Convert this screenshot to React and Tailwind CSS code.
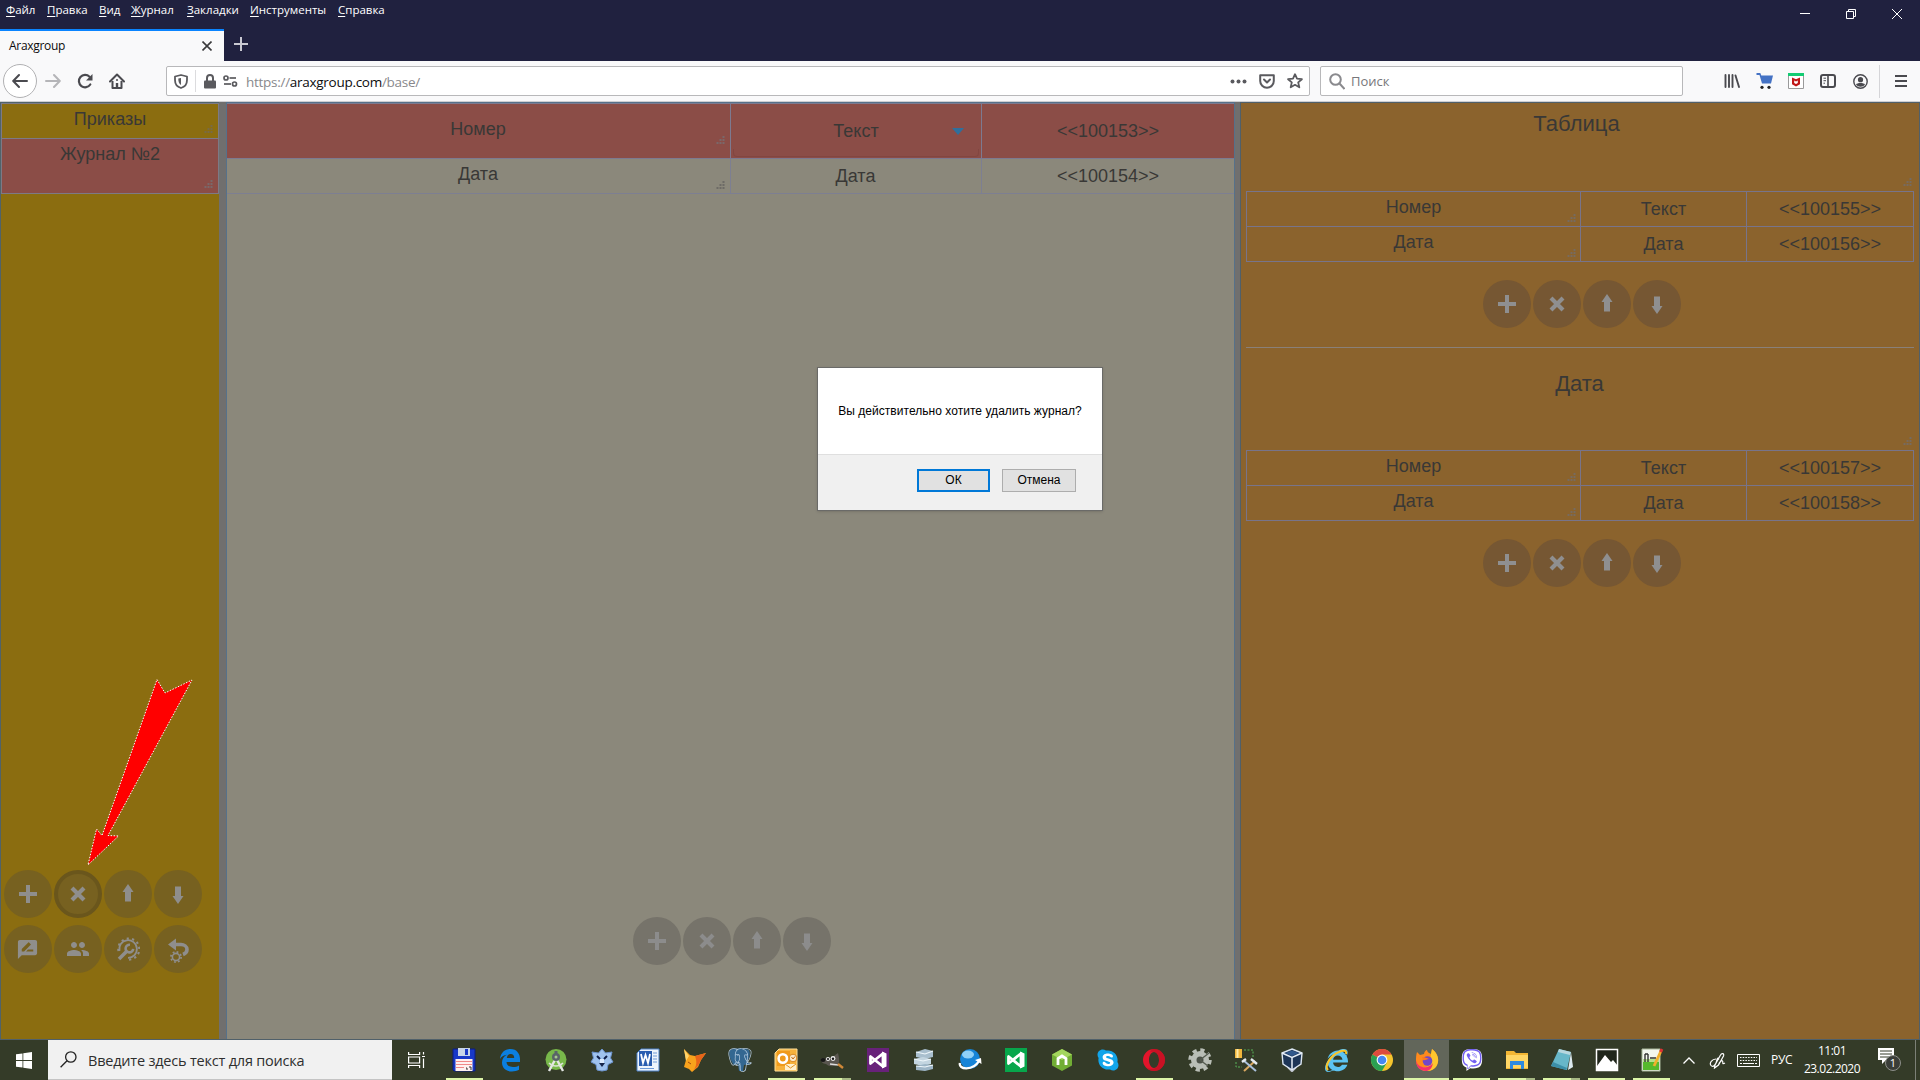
import React from "react";
import {FaInternetExplorer, FaSkype, FaViber} from "react-icons/fa";
import {MdGroup, MdRateReview} from "react-icons/md";
import {SiPostgresql} from "react-icons/si";

const menuItems = [
    {name: "Файл", width: "w-[41px]"},
    {name: "Правка", width: "w-[52px]"},
    {name: "Вид", width: "w-[32px]"},
    {name: "Журнал", width: "w-[56px]"},
    {name: "Закладки", width: "w-[63px]"},
    {name: "Инструменты", width: "w-[88px]"},
    {name: "Справка", width: "w-[60px]"},
];

const Grip = ({className = ""}) => (
    <svg className={`absolute ${className}`} width="9" height="9" viewBox="0 0 9 9" fill="currentColor">
        <path d="M6.5 0h2v2h-2zM3.5 3h2v2h-2zM6.5 3h2v2h-2zM.5 6h2v2h-2zM3.5 6h2v2h-2zM6.5 6h2v2h-2z" />
    </svg>
);

const PlusIcon = () => <svg width="18" height="18" viewBox="0 0 18 18" fill="currentColor"><path d="M7 0h4v7h7v4h-7v7H7v-7H0V7h7z" /></svg>;
const CrossIcon = () => <svg width="18" height="18" viewBox="0 0 18 18" fill="none" stroke="currentColor" strokeWidth="4.2"><path d="M3 3l12 12M15 3L3 15" /></svg>;
const UpIcon = () => <svg className="-mt-0.5" width="12" height="18" viewBox="0 0 12 18" fill="currentColor"><path d="M6 0l5.5 8H9v9.500H3V8H.5z" /></svg>;
const DownIcon = () => <svg className="mt-0.5" width="12" height="18" viewBox="0 0 12 18" fill="currentColor"><path d="M6 18l5.500-8H9V.5H3V10H.5z" /></svg>;

const GearWrenchIcon = () => (
    <svg className="-ml-px -mt-px" width="24" height="24" viewBox="0 0 24 24" fill="none" stroke="currentColor">
        <path d="M3.500 14A8.800 8.800 0 1 1 12 20.800" strokeWidth="1.800" />
        <path d="M2.500 14A10.500 10.500 0 1 1 12 22.500" strokeWidth="2.200" strokeDasharray="2.200 3.200" />
        <path d="M3 22l8-8" strokeWidth="3.600" />
        <path d="M14 7.800a3.800 3.800 0 1 0 3.200 4" strokeWidth="2.600" />
    </svg>
);

const UndoGearIcon = () => (
    <svg width="24" height="28" viewBox="0 0 24 28" fill="none" stroke="currentColor">
        <path d="M7 9.500h8c3 0 6 2 6 5 0 2.500-1.500 4-4 5" strokeWidth="3.600" />
        <path d="M10 3.500v12L2 9.500z" fill="currentColor" stroke="none" />
        <circle cx="10" cy="22" r="3.600" strokeWidth="1.600" />
        <circle cx="10" cy="22" r="5.100" strokeWidth="1.800" strokeDasharray="1.800 2.206" />
    </svg>
);

const RoundButton = ({children, className}) => (
    <button className={`w-12 h-12 rounded-full flex items-center justify-center ${className}`}>{children}</button>
);

const ButtonRow = ({className, color}) => (
    <div className={`flex gap-[2px] ${className}`}>
        <RoundButton className={color}><PlusIcon /></RoundButton>
        <RoundButton className={color}><CrossIcon /></RoundButton>
        <RoundButton className={color}><UpIcon /></RoundButton>
        <RoundButton className={color}><DownIcon /></RoundButton>
    </div>
);

const SideTable = ({rows}) => (
    <div className="w-[668px] ml-[5px] border-l border-t border-[#78748a]">
        {rows.map((row) => (
            <div key={row[2]} className="flex h-[35px] border-b border-[#78748a]">
                <div className="relative w-[334px] pb-1 border-r border-[#78748a] flex items-center justify-center">
                    {row[0]}
                    <Grip className="right-[4px] bottom-[3px] text-[#776b5f]" />
                </div>
                <div className="w-[166px] border-r border-[#78748a] flex items-center justify-center">{row[1]}</div>
                <div className="flex-1 border-r border-[#78748a] flex items-center justify-center">{row[2]}</div>
            </div>
        ))}
    </div>
);

const TabBar = () => (
    <div className="h-[61px] bg-[#20213f] flex justify-between font-['Open_Sans','Noto_Sans',sans-serif]">
        <div>
            <div className="h-[29px] pl-[6px] flex text-[11.500px] leading-5 text-white">
                {menuItems.map((item) => (
                    <span key={item.name} className={`whitespace-nowrap ${item.width}`}>
                        <span className="underline underline-offset-2">{item.name[0]}</span>{item.name.slice(1)}
                    </span>
                ))}
            </div>
            <div className="flex h-8">
                <div className="w-[224px] bg-[#f9f9fa] border-t-2 border-[#0a84ff] flex items-center justify-between pl-[9px] pr-[12px] text-[12px] tracking-[-0.3px] text-[#0c0c0d]">
                    Araxgroup
                    <svg width="10" height="10" viewBox="0 0 10 10" stroke="#3a3a3c" strokeWidth="1.600"><path d="M.5.5l9 9M9.500.5l-9 9" /></svg>
                </div>
                <div className="pl-[10px] pt-2">
                    <svg width="14" height="14" viewBox="0 0 14 14" stroke="#c9c9d2" strokeWidth="2"><path d="M7 0v14M0 7h14" /></svg>
                </div>
            </div>
        </div>
        <div className="flex gap-[36px] pt-[9px] pr-[18px] text-white">
            <svg width="10" height="10" viewBox="0 0 10 10" stroke="currentColor"><path d="M0 4.500h10" /></svg>
            <svg width="10" height="10" viewBox="0 0 10 10" stroke="currentColor" fill="none"><path d="M.5 2.500h7v7h-7zM2.500 2.500v-2h7v7h-2" /></svg>
            <svg width="10" height="10" viewBox="0 0 10 10" stroke="currentColor"><path d="M0 0l10 10M10 0L0 10" /></svg>
        </div>
    </div>
);

const NavBar = () => (
    <div className="h-[41px] bg-[#f9f9fa] border-b border-[#cfcfd2] flex items-center text-[#4a4a4f] font-['Open_Sans','Noto_Sans',sans-serif]">
        <div className="ml-[3px] w-[34px] h-[34px] rounded-full border border-[#b1b1b3] bg-white flex items-center justify-center">
            <svg width="16" height="16" viewBox="0 0 16 16" fill="none" stroke="currentColor" strokeWidth="2" strokeLinecap="round" strokeLinejoin="round"><path d="M15 8H1.500M7 2L1.200 8 7 14" /></svg>
        </div>
        <svg className="ml-2 text-[#b5b5b8]" width="16" height="16" viewBox="0 0 16 16" fill="none" stroke="currentColor" strokeWidth="2" strokeLinecap="round" strokeLinejoin="round"><path d="M1 8h13.500M9 2l5.800 6L9 14" /></svg>
        <svg className="ml-4" width="16" height="16" viewBox="0 0 16 16" fill="none" stroke="currentColor" strokeWidth="2.200" strokeLinecap="round">
            <path d="M13.300 11.500A6.200 6.200 0 1 1 12.500 3.700" />
            <path d="M15.500 1v6.500H9z" fill="currentColor" stroke="none" />
        </svg>
        <svg className="ml-4" width="16" height="16" viewBox="0 0 16 16" fill="none" stroke="currentColor" strokeWidth="2" strokeLinejoin="round">
            <path d="M1 8.500L8 1.500l7 7" strokeLinecap="round" />
            <path d="M3.500 8v7h9V8" />
            <path d="M8 14.500V10" strokeWidth="2.400" />
            <path d="M7 7h2" strokeWidth="1.500" />
        </svg>
        <div className="ml-[41px] w-[1144px] h-[30px] border border-[#b8b8ba] rounded-[2px] bg-white flex items-center text-[#5a5a5e]">
            <svg className="ml-[7px]" width="14" height="15" viewBox="0 0 14 15" fill="none" stroke="currentColor" strokeWidth="1.800">
                <path d="M7 1L13 2.500V6c0 4-2.500 7-6 8C3.500 13 1 10 1 6V2.500z" strokeLinejoin="round" />
                <path d="M7 4v7C5 10 4.300 8 4.300 4.600z" fill="currentColor" stroke="none" />
            </svg>
            <div className="ml-[7px] w-px h-[22px] bg-[#dcdcde]"></div>
            <svg className="ml-2" width="12" height="15" viewBox="0 0 12 15" fill="none" stroke="currentColor">
                <path d="M3 7V4a3 3 0 0 1 6 0v3" strokeWidth="2" />
                <rect x="0" y="6.500" width="12" height="8" rx="1" fill="currentColor" stroke="none" />
            </svg>
            <svg className="ml-[7px]" width="15" height="12" viewBox="0 0 15 12" fill="none" stroke="currentColor" strokeWidth="1.700">
                <circle cx="3" cy="3" r="2" /><path d="M6.500 3H13" /><circle cx="11.500" cy="9" r="2" /><path d="M1 9h7" />
            </svg>
            <div className="ml-[8px] pt-[2px] text-[13.500px] text-[#88888c] tracking-[-0.280px]">https://<span className="text-[#0c0c0d]">araxgroup.com</span>/base/</div>
            <svg className="ml-auto" width="17" height="5" viewBox="0 0 17 5" fill="currentColor"><circle cx="2.500" cy="2.500" r="2" /><circle cx="8.500" cy="2.500" r="2" /><circle cx="14.500" cy="2.500" r="2" /></svg>
            <svg className="ml-[12px]" width="16" height="15" viewBox="0 0 16 15" fill="none" stroke="currentColor" strokeWidth="2" strokeLinecap="round" strokeLinejoin="round">
                <path d="M1.200 1.200h13.600V7a6.800 6.800 0 0 1-13.600 0z" /><path d="M5 5.500l3 3 3-3" />
            </svg>
            <svg className="ml-[12px] mr-[6px]" width="16" height="16" viewBox="0 0 16 16" fill="none" stroke="currentColor" strokeWidth="1.800" strokeLinejoin="round">
                <path d="M8 1.200l2 4.500 4.900.5-3.700 3.200 1.100 4.900L8 11.800l-4.300 2.500 1.100-4.900L1.100 6.200 6 5.700z" />
            </svg>
        </div>
        <div className="ml-[10px] w-[363px] h-[30px] border border-[#b8b8ba] rounded-[2px] bg-white flex items-center pl-[8px] text-[#8a8a8e]">
            <svg width="16" height="17" viewBox="0 0 16 17" fill="none" stroke="currentColor" strokeWidth="2"><circle cx="6.500" cy="6.500" r="5.300" /><path d="M10.500 10.500l5 5.500" /></svg>
            <div className="ml-[6px] pt-[2px] text-[13px] text-[#77777b]">Поиск</div>
        </div>
        <svg className="ml-[41px]" width="16" height="14" viewBox="0 0 16 14" stroke="currentColor" strokeWidth="1.900" strokeLinecap="round"><path d="M1.500 1v12M5 1v12M8.500 1v12M11.500 1.500L15 13" /></svg>
        <svg className="ml-[16px]" width="17" height="16" viewBox="0 0 17 16">
            <path d="M.5 0h3.800l1 2.500H17l-2 8H6L3.500 2H.5z" fill="#4472c4" />
            <circle cx="6" cy="14.300" r="1.600" fill="#222" /><circle cx="13" cy="14.300" r="1.600" fill="#222" />
        </svg>
        <svg className="ml-[15px]" width="16" height="16" viewBox="0 0 16 16">
            <path d="M.5.5h15v15H.5z" fill="#fff" stroke="#9a9a9a" /><path d="M0 0h16v3H0z" fill="#12cc72" />
            <path d="M4 4.500l4 1.800 4-1.800v6.700l-4 2.300-4-2.300z" fill="#c01818" /><path d="M6.200 7.500L8 8.500l1.800-1v2.600L8 11l-1.800-.9z" fill="#fff" />
        </svg>
        <svg className="ml-[16px]" width="16" height="14" viewBox="0 0 16 14" fill="none" stroke="currentColor">
            <rect x="1" y="1" width="14" height="12" rx="2" strokeWidth="2" /><path d="M8 1v12" strokeWidth="1.600" /><path d="M3.500 4.200H6M3.500 6.700H6M3.500 9.200H5" />
        </svg>
        <svg className="ml-[17px]" width="15" height="15" viewBox="0 0 15 15" fill="none" stroke="currentColor">
            <circle cx="7.500" cy="7.500" r="6.700" strokeWidth="1.400" /><circle cx="7.500" cy="5.700" r="2.600" fill="currentColor" stroke="none" />
            <path d="M3 10.500C4 8.500 11 8.500 12 10.500 10 13.500 5 13.500 3 10.500z" fill="currentColor" stroke="none" />
        </svg>
        <div className="ml-[11px] w-px h-[33px] bg-[#d5d5d8]"></div>
        <svg className="ml-[15px]" width="12" height="12" viewBox="0 0 12 12" stroke="currentColor" strokeWidth="2"><path d="M0 1h12M0 6h12M0 11h12" /></svg>
    </div>
);

const Journals = () => (
    <div className="w-[219px] h-full bg-[#8b6d10] border-l border-t border-[#50636a] flex flex-col">
        <div className="relative h-[36px] border border-[#7d7a85] pt-[5px] text-center">
            Приказы
            <Grip className="right-[5px] bottom-[4px] text-[#786b45]" />
        </div>
        <div className="relative h-[56px] -mt-px border border-[#7d7a85] bg-[#8b4d47] pt-[5px] text-center">
            Журнал №2
            <Grip className="right-[5px] bottom-[4px] text-[#7a686a]" />
        </div>
        <div className="mt-auto mb-[66px] pl-[3px] grid grid-cols-[repeat(4,48px)] gap-x-[2px] gap-y-[7px] text-[#8f8e8c]">
            <RoundButton className="bg-[#776120]"><PlusIcon /></RoundButton>
            <RoundButton className="bg-[#776120] border-4 border-[#6a561c]"><CrossIcon /></RoundButton>
            <RoundButton className="bg-[#776120]"><UpIcon /></RoundButton>
            <RoundButton className="bg-[#776120]"><DownIcon /></RoundButton>
            <RoundButton className="bg-[#776120]"><MdRateReview className="-ml-px" size={23} /></RoundButton>
            <RoundButton className="bg-[#776120]"><MdGroup size={24} /></RoundButton>
            <RoundButton className="bg-[#776120]"><GearWrenchIcon /></RoundButton>
            <RoundButton className="bg-[#776120]"><UndoGearIcon /></RoundButton>
        </div>
    </div>
);

const Document = () => (
    <div className="w-[1009px] h-full bg-[#8b887b] border-x border-t border-[#56718a] flex flex-col">
        <div className="flex h-[56px] bg-[#8b4d47] border-y border-[#7d7a90]">
            <div className="relative w-[504px] pb-1 pr-px border-r border-[#7d7a90] flex items-center justify-center">
                Номер
                <Grip className="right-[5px] bottom-[13px] text-[#7a686a]" />
            </div>
            <div className="relative w-[251px] border-r border-[#7d7a90] flex items-center justify-center">
                <span className="absolute inset-x-[2px] bottom-px h-2 rounded-b-[4px] border-b border-x border-[#7d433e] opacity-60"></span>
                Текст
                <svg className="absolute right-[17px] top-[24px]" width="12" height="7" viewBox="0 0 12 7"><path d="M0 0h12L6 7z" fill="#2f6f9c" /></svg>
            </div>
            <div className="flex-1 flex items-center justify-center">&lt;&lt;100153&gt;&gt;</div>
        </div>
        <div className="flex h-[35px] border-b border-[#7d7f92]">
            <div className="relative w-[504px] pb-1 pr-px border-r border-[#7d7f92] flex items-center justify-center">
                Дата
                <Grip className="right-[5px] bottom-[3px] text-[#6d6b66]" />
            </div>
            <div className="w-[251px] pr-px border-r border-[#7d7f92] flex items-center justify-center">Дата</div>
            <div className="flex-1 flex items-center justify-center">&lt;&lt;100154&gt;&gt;</div>
        </div>
        <ButtonRow className="mt-auto mb-[74px] justify-center pl-[3px] text-[#8c8c8c]" color="bg-[#76736a]" />
    </div>
);

const Tables = () => (
    <div className="flex-1 h-full bg-[#8b632d] border-x border-t border-[#50606a]">
        <div className="relative h-[88px] pt-[7px] pr-[7px] text-center text-[22px] leading-7">
            Таблица
            <Grip className="right-[7px] bottom-[4px] text-[#776b5f]" />
        </div>
        <SideTable rows={[["Номер", "Текст", "<<100155>>"], ["Дата", "Дата", "<<100156>>"]]} />
        <ButtonRow className="mt-[18px] justify-center pl-[4px] text-[#8f8f90]" color="bg-[#765733]" />
        <div className="mt-[19px] mx-[5px] h-px bg-[#8a8078]"></div>
        <div className="relative h-[102px] pt-[22px] pr-px text-center text-[22px] leading-7">
            Дата
            <Grip className="right-[7px] bottom-[4px] text-[#776b5f]" />
        </div>
        <SideTable rows={[["Номер", "Текст", "<<100157>>"], ["Дата", "Дата", "<<100158>>"]]} />
        <ButtonRow className="mt-[18px] justify-center pl-[4px] text-[#8f8f90]" color="bg-[#765733]" />
    </div>
);

const ConfirmDialog = () => (
    <div className="absolute left-[817px] top-[367px] w-[286px] h-[144px] border border-[#6a6a68] bg-white text-[12px] text-black shadow-sm flex flex-col">
        <div className="h-[86px] flex items-center justify-center whitespace-nowrap tracking-[0.040px]">Вы действительно хотите удалить журнал?</div>
        <div className="flex-1 bg-[#f0f0f0] border-t border-[#dfdfdf] flex pt-[14px] pl-[99px] gap-[12px]">
            <button className="w-[73px] h-[23px] bg-[#e1e1e1] border-2 border-[#0078d7] flex items-center justify-center pb-px">ОК</button>
            <button className="w-[74px] h-[23px] bg-[#e1e1e1] border border-[#adadad] flex items-center justify-center pb-px">Отмена</button>
        </div>
    </div>
);

const Svg = ({children}) => <svg width="24" height="24" viewBox="0 0 24 24">{children}</svg>;

const VsLogo = ({color}) => (
    <Svg>
        <path d="M1 0h22v24H1z" fill={color} />
        <path d="M4.500 8.500v7L17 5.500v13z" fill="none" stroke="#fff" strokeWidth="2.800" strokeLinejoin="round" />
        <path d="M16 3.500l4.500 2v13l-4.500 2z" fill="#fff" />
    </Svg>
);

const taskIcons = [
    {name: "commander", open: true, icon: <Svg>
        <path d="M1 1h22v22H2L1 22z" fill="#1838c8" stroke="#0b1d80" /><path d="M6 0h12v8H6z" fill="#c7d4e8" /><path d="M13 1h3v6h-3z" fill="#1838c8" />
        <path d="M3.500 11h17v12h-17z" fill="#fff0f0" /><path d="M4 13.500h16M4 16.500h16M4 19.500h8" stroke="#f08888" strokeWidth="1.200" /><path d="M14 20h1v2M17 19h2v3" stroke="#333" fill="none" />
    </Svg>},
    {name: "edge", icon: <Svg>
        <path d="M2 11C3 4 7 1 12.500 1 19 1 22 6 22 11v3H8.500c.3 3.500 3 5 6.500 5 2.500 0 4.500-.7 6-1.600v4.400C19 23 16.500 23.500 14 23.500 8 23.500 4 20 4 14.500c0-3.600 2-6.300 5-7.700C6 7 3.500 8.500 2 11zm6.800-1h7.400c0-2.500-1.200-4-3.500-4S9.200 7.600 8.800 10z" fill="#0b7fe0" />
    </Svg>},
    {name: "android", icon: <Svg>
        <circle cx="12" cy="11.500" r="10.500" fill="#78b84a" /><path d="M12 3v4" stroke="#596468" strokeWidth="3" /><path d="M12 10L5 23M12 10l7 13" stroke="#e4e6e4" strokeWidth="2.400" /><path d="M5 15c4 4 10 4 14 0" stroke="#dfe6da" strokeWidth="1.500" fill="none" /><circle cx="12" cy="9" r="4" fill="#596468" /><circle cx="12" cy="9" r="1.500" fill="#a8c890" />
    </Svg>},
    {name: "wolf", icon: <Svg>
        <path d="M12 1l3.500 4L22 4l-1.500 6 2.500 4-5 2.500-1 5.500-5 1-5-1-1-5.500L1 14l2.500-4L2 4l6.500 1z" fill="#9fc3ef" stroke="#6c94cf" />
        <path d="M7 8l3 3M17 8l-3 3" stroke="#10204a" strokeWidth="2" /><path d="M9 15h6l-3 4z" fill="#16264c" /><path d="M10 11h4v4h-4z" fill="#dcecff" />
    </Svg>},
    {name: "word", icon: <Svg>
        <path d="M5 1h18v22H1V5z" fill="#eef4fc" stroke="#4a80c8" /><path d="M3 3h13v15H3z" fill="#2a5db0" /><path d="M5 6l2 9 2.500-8 2.500 8 2-9" fill="none" stroke="#fff" strokeWidth="1.800" /><path d="M17 5h4M17 8h4M17 11h4M17 14h4M4 20.500h14" stroke="#6e9ad8" />
    </Svg>},
    {name: "foxpro", icon: <Svg>
        <path d="M2 1l6 6 5 1 11-3-5 7-3 7-6 5-3-3-5-2 2-7z" fill="#f8a21c" /><path d="M13 8l11-3-5 7-3 6-5 5c4-5 4-10 2-15z" fill="#e8641a" /><path d="M2 1l5 7-3 5z" fill="#ffd36a" /><path d="M6 14l3 2" stroke="#a04a10" />
    </Svg>},
    {name: "postgres", icon: (
        <div className="relative">
            <svg className="absolute inset-0" width="24" height="24" viewBox="0 0 24 24"><path d="M2 2c4-2 15-2 19 0 2 4 0 9-2 12l3 2-6 1-1 6h-4l-1-7-4 1C3 14 0 6 2 2z" fill="#336791" /></svg>
            <SiPostgresql className="relative" size={24} color="#b4cbe0" />
        </div>
    )},
    {name: "outlook", open: true, icon: <Svg>
        <path d="M5 1h18v22H1V5z" fill="#f6b23c" stroke="#ffe09a" /><path d="M3 3h13v15H3z" fill="#f09a1a" /><circle cx="8.800" cy="10.500" r="4.200" fill="none" stroke="#fff" strokeWidth="2.600" /><circle cx="19" cy="10" r="3.800" fill="#fbe8c8" stroke="#d88820" /><path d="M17.500 9l1.500 2 2-2.500" stroke="#c46a10" fill="none" /><path d="M11 16h11v6H11z" fill="#fff0cc" /><path d="M11 16l5.500 4 5.500-4" stroke="#e09020" fill="none" />
    </Svg>},
    {name: "gimp", open: true, split: true, icon: <Svg>
        <path d="M1 10c4 2 11 0 17-5 1 4 2 9 0 11-3 3-9 3-12 0-3 0-6-3-5-6z" fill="#5a5650" /><circle cx="8" cy="11" r="2" fill="#eee" /><circle cx="13" cy="10.500" r="2.400" fill="#eee" /><circle cx="8" cy="11" r="1" fill="#111" /><circle cx="13" cy="10.800" r="1.200" fill="#111" /><ellipse cx="3" cy="12" rx="2.500" ry="2" fill="#161616" /><path d="M10 16l8 1" stroke="#ddd" strokeWidth="1.500" /><path d="M18 16l5 4" stroke="#d08838" strokeWidth="2.400" />
    </Svg>},
    {name: "studio", icon: <VsLogo color="#68217a" />},
    {name: "servers", icon: <Svg>
        <path d="M4 4l9-3 8 2v6l-8 2-9-2z" fill="#a9bfce" /><path d="M2 11l9-2 8 2v5l-8 2-9-2z" fill="#c3d5e0" /><path d="M4 18l9-2 8 1v4l-8 2-9-1z" fill="#9db5c6" /><path d="M4 4l9 2 8-3M2 11l9 2 8-2M4 18l9 1 8-2" stroke="#eef6fa" strokeWidth="1.200" fill="none" />
    </Svg>},
    {name: "globe", icon: <Svg>
        <circle cx="12" cy="11" r="10" fill="#1684d8" /><ellipse cx="10" cy="6.500" rx="6" ry="4" fill="#8fd0f8" /><path d="M2 15c-2 7 13 8 19-2" stroke="#fff" strokeWidth="2.400" fill="none" /><path d="M17 12l6-2 .5 6z" fill="#fff" />
    </Svg>},
    {name: "code", icon: <VsLogo color="#07a64b" />},
    {name: "node", icon: <Svg>
        <path d="M12 1l10 5.500v11L12 23 2 17.500v-11z" fill="#72ae35" /><path d="M12 1l10 5.500L12 12 2 6.500z" fill="#a4d65e" /><path d="M8 17v-6.500l4-2.500 4 2.500V17" stroke="#fff" strokeWidth="2.800" fill="none" />
    </Svg>},
    {name: "skype", icon: <FaSkype size={24} color="#12a5ea" className="bg-[radial-gradient(circle,white_45%,transparent_46%)]" />},
    {name: "opera", open: true, icon: <Svg>
        <path fillRule="evenodd" d="M12 1a11 11 0 1 0 0 22 11 11 0 0 0 0-22zm0 3c3 0 5 4 5 8s-2 8-5 8-5-4-5-8 2-8 5-8z" fill="#e3152b" /><path d="M12 1a11 11 0 0 1 0 22c-3 0-5-1-7-3 8 3 12-1 12-8s-5-9-9-8c1-2 3-3 4-3z" fill="#b80f20" opacity=".6" />
    </Svg>},
    {name: "gear", icon: <Svg>
        <circle cx="12" cy="12" r="9" fill="#b9beb6" /><circle cx="12" cy="12" r="10" fill="none" stroke="#b9beb6" strokeWidth="3.500" strokeDasharray="4.200 3.654" /><circle cx="12" cy="12" r="3.500" fill="#4b5147" /><path d="M12 12l9-7M12 12l8 6" stroke="#555c50" strokeWidth="1.400" />
    </Svg>},
    {name: "dbtools", icon: <Svg>
        <path d="M1 1h7v9H1z" fill="#f0b63c" /><path d="M2.500 1h2v9h-2z" fill="#ffe9a6" /><path d="M10 2h9v8M2 14v5h6" stroke="#58b558" strokeDasharray="2 1.500" fill="none" /><path d="M10 23l11-10" stroke="#d9a860" strokeWidth="2" /><path d="M9 12l13 11" stroke="#aac0dc" strokeWidth="2" /><path d="M17 11l6 5M8 14l4-3" stroke="#e4eaf0" strokeWidth="2.400" />
    </Svg>},
    {name: "vbox", icon: <Svg>
        <path d="M8 19l4 4 4-4" stroke="#b8bcc4" strokeWidth="2.400" fill="none" /><path d="M12 1l10 4-1 11-9 6-9-6L2 5z" fill="#1d3557" stroke="#dce6f2" strokeWidth="1.400" /><path d="M5 5l7 3 7-3-7-2.500z" fill="#31588c" /><path d="M2 5l10 4.500L22 5M12 10v12" stroke="#e6eef8" strokeWidth="1.500" fill="none" />
    </Svg>},
    {name: "ie", icon: <div className="relative"><FaInternetExplorer size={23} color="#5cc3f2" /><svg className="absolute inset-0" width="23" height="23" viewBox="0 0 23 23" fill="none" stroke="#f7c52c" strokeWidth="2"><path d="M3 21C-1 17 6 6 14 3c4-2 8-2 7 2" /></svg></div>},
    {name: "chrome", icon: <Svg>
        <circle cx="12" cy="12" r="11" fill="#f5c52d" /><path d="M12 12L2.470 6.500A11 11 0 0 1 21.530 6.500H12z" fill="#dd4b3e" /><path d="M2.470 6.500A11 11 0 0 0 12 23l4.760-8.250L12 12z" fill="#2aa052" /><circle cx="12" cy="12" r="5.400" fill="#fff" /><circle cx="12" cy="12" r="4.300" fill="#4688f1" />
    </Svg>},
    {name: "firefox", open: true, active: true, icon: <Svg>
        <path d="M2 4l3 3 4-1c0-2 2-4 3-4 0 2 2 3 4 4l1-5c4 3 7 8 6 13-1 6-6 9-11 9S1 19 1 13c0-3 0-6 1-9z" fill="#ff8a1c" /><path d="M17 1c4 3 7 8 6 13-1 6-6 9-11 9-4 0-8-2-10-6 5 4 11 3 13-1 2-3 0-7 1-10z" fill="#ffc62e" /><path d="M1 12c1 6 6 8 11 7 4-1 5-3 6-4-1 6-4 8-7 8C5 23 1 19 1 12z" fill="#f5326b" /><circle cx="12.500" cy="13" r="4.800" fill="#7447c8" /><path d="M7 9c3 0 5 1 7 2-3 0-4 2-6 1z" fill="#ff7a1c" />
    </Svg>},
    {name: "viber", open: true, icon: <div className="relative"><svg width="24" height="24" viewBox="0 0 26 26"><path d="M13 1C4 1 2 4 2 12c0 5 1 8 5 9v4l4-3c10 1 13-2 13-10S22 1 13 1z" fill="#fff" /></svg><FaViber className="absolute left-[2px] top-[1px]" size={20} color="#7360f2" /></div>},
    {name: "explorer", open: true, split: true, icon: <Svg>
        <path d="M1 3h8l2 2h12v16H1z" fill="#f3b634" /><path d="M1 7h22v13H1z" fill="#ffd665" /><path d="M5 21v-8h14v8h-3v-4H8v4z" fill="#2e8ae0" />
    </Svg>},
    {name: "notebook", open: true, split: true, icon: <Svg>
        <path d="M9 1l12 3-4 18L1 18z" fill="#67b7c9" /><path d="M9 1l12 3-1 3L8 4z" fill="#b7d6de" /><path d="M21 4l2 15-5 3z" fill="#dceaf0" /><path d="M3 14l14 6-1 2-15-4z" fill="#3c8fa8" />
    </Svg>},
    {name: "photos", open: true, icon: <Svg>
        <path d="M1.500 1.500h21v21h-21z" fill="#20261b" stroke="#fff" strokeWidth="1.500" /><path d="M2 22v-4l8-11 6 7 2-2 5 6v4z" fill="#fff" />
    </Svg>},
    {name: "editor", open: true, icon: <Svg>
        <path d="M2 1h18v22H2z" fill="#f4f7ef" stroke="#a8b89a" /><path d="M3 14h16v8H3z" fill="#56b92c" /><path d="M3 11h16v3H3z" fill="#b6e08c" /><path d="M5 6v8M8 6v8M5 6h3M10 10h6" stroke="#333" strokeWidth="1.400" fill="none" /><path d="M14 18L21 3" stroke="#f2b02c" strokeWidth="2.800" /><path d="M20.500 4l1.500-3" stroke="#d33" strokeWidth="3" />
    </Svg>},
];

const TaskBar = () => (
    <div className="h-10 bg-[#343b28] flex text-white font-['Open_Sans','Noto_Sans',sans-serif]">
        <div className="w-12 flex items-center justify-center">
            <svg width="16" height="17" viewBox="0 0 16 17" fill="#fff"><path d="M0 2.300l6.500-.9v6.700H0zM7.300 1.200L16 0v8.100H7.300zM0 8.900h6.500v6.700L0 14.700zM7.300 8.900H16V17l-8.700-1.200z" /></svg>
        </div>
        <div className="w-[344px] bg-[#f1f1f1] border-b border-[#c4c4c4] flex items-center pl-[12px] text-[#2e2e2e]">
            <svg width="17" height="17" viewBox="0 0 17 17" fill="none" stroke="#222" strokeWidth="1.300"><circle cx="10.800" cy="6" r="5.200" /><path d="M7 9.800L.6 16.300" /></svg>
            <div className="ml-[11px] pt-[2px] text-[14.500px] tracking-[-0.210px] whitespace-nowrap">Введите здесь текст для поиска</div>
        </div>
        <div className="w-[49px] flex items-center justify-center">
            <svg width="17" height="16" viewBox="0 0 17 16" fill="none" stroke="#fff" strokeWidth="1.200"><path d="M.6 0v2.500h11V0M.6 16v-2.500h11V16M.6 5h11v6H.6zM15.500 0v2.500M15.500 6.500V16M14 4.500h3" /></svg>
        </div>
        {taskIcons.map((app, i) => (
            <div key={app.name} className={`h-10 shrink-0 flex flex-col items-center ${i < 18 ? "w-[46px]" : "w-[45px]"} ${app.active ? "bg-[#62665a]" : ""}`}>
                <div className="h-[38px] flex items-center pt-[2px]">{app.icon}</div>
                {app.open && (
                    <div className={`h-[2px] flex bg-[#dcf5a8] ${app.active ? "w-full" : "w-[37px]"}`}>
                        {app.split && <span className="ml-auto w-[9px] bg-[#a6b884]"></span>}
                    </div>
                )}
            </div>
        ))}
        <div className="flex-1 flex items-center pl-[9px]">
            <svg width="12" height="7" viewBox="0 0 12 7" fill="none" stroke="#fff" strokeWidth="1.300"><path d="M.5 6.500L6 1l5.500 5.500" /></svg>
            <svg className="ml-[14px]" width="17" height="17" viewBox="0 0 17 17" fill="none" stroke="#fff" strokeWidth="1.200"><path d="M6 13l5.500-10c1-2 4-2 3 1l-5 9-4 3zM7 7c-4 0-7 4-5 6.500s5-.5 6-6c.5-2 2-1.500 1.500 0M9.500 13c1-3 3-5 4-4s-1 4 2.500 2" /></svg>
            <svg className="ml-[11px]" width="23" height="13" viewBox="0 0 23 13" fill="none" stroke="#fff"><path d="M.5.5h22v12H.5z" /><path d="M3 3.500h17M3 6.500h17" strokeDasharray="1.500 1.200" /><path d="M3 9.500h2M6 9.500h11M18 9.500h2" /></svg>
            <div className="ml-[11px] w-[24px] text-[12px] tracking-[-0.3px]">РУС</div>
            <div className="ml-[7px] w-[60px] text-center text-[12px] leading-[18px] tracking-[-0.5px] whitespace-nowrap">
                <div>11:01</div>
                <div>23.02.2020</div>
            </div>
            <div className="relative ml-[15px] w-[26px] h-[26px]">
                <svg width="18" height="18" viewBox="0 0 18 18"><path d="M1 1h16v12H9l-4 4v-4H1z" fill="#fff" /><path d="M3 4h12M3 7h12M3 10h12" stroke="#343b28" /></svg>
                <span className="absolute left-[8px] top-[8px] w-4 h-4 rounded-full bg-[#3a3d38] border border-[#8d8f89] text-[11px] leading-[14px] text-center">1</span>
            </div>
            <div className="ml-auto mr-1 w-px h-10 bg-[#7c8076]"></div>
        </div>
    </div>
);

const App = () => {
    return (
        <div className="relative w-[1920px] h-[1080px] overflow-hidden flex flex-col font-['Liberation_Sans',Arial,sans-serif]">
            <TabBar />
            <NavBar />
            <div className="h-[938px] flex bg-[#706f6e] border-b border-[#50606a] text-[18px] leading-5 text-[#393836]">
                <Journals />
                <div className="w-[7px]"></div>
                <Document />
                <div className="w-[5px]"></div>
                <Tables />
            </div>
            <TaskBar />
            <ConfirmDialog />
            {/* pointer to the delete button */}
            <svg className="absolute left-[84px] top-[675px]" width="112" height="194" viewBox="84 675 112 194">
                <path d="M157 679.500L165 693l27-13-84 155.500 10.500.5L88 865l8.500-36 5.500 6.500z" fill="#f00" />
                <path d="M157 679.500L165 693l27-13-84 155.500 10.500.5L88 865l8.500-36 5.500 6.500z" fill="none" stroke="#fff" strokeDasharray="1.500 1.500" />
            </svg>
        </div>
    );
};

export default App;
